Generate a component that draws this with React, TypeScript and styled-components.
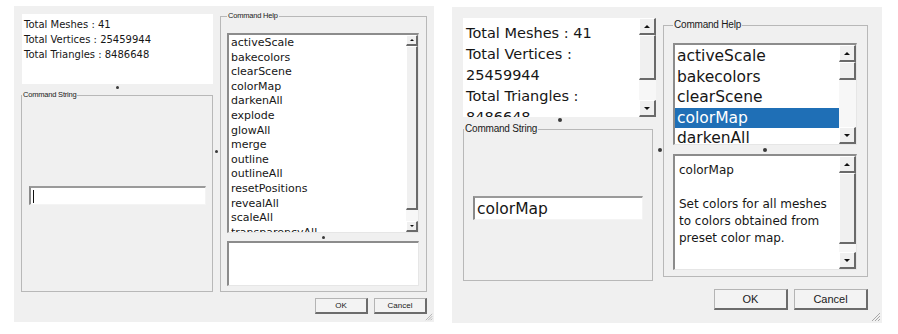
import * as React from 'react';
import styled, { createGlobalStyle, ThemeProvider } from 'styled-components';

interface DialogTheme {
  width: number;
  height: number;
  offsetX: number;
  offsetY: number;
  padTop: number;
  padLeft: number;
  padRight: number;
  leftCol: number;
  infoTop: number;
  infoInset: number;
  infoHeight: number;
  infoFont: number;
  infoLine: number;
  infoPad: string;
  leftGap: number;
  cmdWidth: number;
  cmdHeight: number;
  legendFont: number;
  legendLine: number;
  inputInset: number;
  inputWidth: number;
  inputHeight: number;
  inputFont: number;
  colGap: number;
  helpWidth: number;
  helpHeight: number;
  helpPad: string;
  listHeight: number;
  listFont: number;
  rowHeight: number;
  visibleRows: number;
  helpGap: number;
  descHeight: number;
  descFont: number;
  descLine: number;
  descPad: string;
  scrollWidth: number;
  arrowSize: number;
  glyph: number;
  footerGap: number;
  buttonWidth: number;
  buttonHeight: number;
  buttonGap: number;
  buttonFont: number;
  dotSize: number;
  gripSize: number;
}

type P = { theme: DialogTheme };

const compact: DialogTheme = {
  width: 420,
  height: 316,
  offsetX: 14,
  offsetY: 6,
  padTop: 5,
  padLeft: 7,
  padRight: 7,
  leftCol: 192,
  infoTop: 3,
  infoInset: 1,
  infoHeight: 70,
  infoFont: 10,
  infoLine: 15,
  infoPad: '3px 2px',
  leftGap: 6,
  cmdWidth: 192,
  cmdHeight: 202,
  legendFont: 7.5,
  legendLine: 10,
  inputInset: 7,
  inputWidth: 177,
  inputHeight: 19,
  inputFont: 13,
  colGap: 7,
  helpWidth: 207,
  helpHeight: 281,
  helpPad: '12px 7px 5px 6px',
  listHeight: 200,
  listFont: 11,
  rowHeight: 14.6,
  visibleRows: 14,
  helpGap: 8,
  descHeight: 45,
  descFont: 10,
  descLine: 14,
  descPad: '3px 3px',
  scrollWidth: 12,
  arrowSize: 11,
  glyph: 2.5,
  footerGap: 6,
  buttonWidth: 53,
  buttonHeight: 16,
  buttonGap: 6,
  buttonFont: 8,
  dotSize: 3,
  gripSize: 8,
};

const large: DialogTheme = {
  width: 430,
  height: 316,
  offsetX: 18,
  offsetY: 7,
  padTop: 11,
  padLeft: 11,
  padRight: 14,
  leftCol: 193,
  infoTop: 0,
  infoInset: 0,
  infoHeight: 99,
  infoFont: 14.5,
  infoLine: 21,
  infoPad: '4.5px 3px',
  leftGap: 5,
  cmdWidth: 190,
  cmdHeight: 159,
  legendFont: 10,
  legendLine: 14,
  inputInset: 9,
  inputWidth: 170,
  inputHeight: 24,
  inputFont: 15.5,
  colGap: 7,
  helpWidth: 205,
  helpHeight: 259,
  helpPad: '11px 10px 6px 9px',
  listHeight: 102,
  listFont: 15.5,
  rowHeight: 20.5,
  visibleRows: 5,
  helpGap: 9,
  descHeight: 116,
  descFont: 12,
  descLine: 17,
  descPad: '5.5px 4px',
  scrollWidth: 17,
  arrowSize: 17,
  glyph: 3.5,
  footerGap: 8,
  buttonWidth: 74,
  buttonHeight: 21,
  buttonGap: 6,
  buttonFont: 11,
  dotSize: 4,
  gripSize: 10,
};

const commands = [
  'activeScale',
  'bakecolors',
  'clearScene',
  'colorMap',
  'darkenAll',
  'explode',
  'glowAll',
  'merge',
  'outline',
  'outlineAll',
  'resetPositions',
  'revealAll',
  'scaleAll',
  'transparencyAll',
];

const GlobalStyle = createGlobalStyle`
  html, body {
    margin: 0;
    padding: 0;
    background: #ffffff;
  }
  body {
    font-family: "DejaVu Sans", "Liberation Sans", sans-serif;
    color: #161616;
  }
`;

const Page = styled.div`
  display: flex;
  align-items: flex-start;
  width: 898px;
  height: 334px;
  overflow: hidden;
`;

const Frame = styled.div<P>`
  position: relative;
  box-sizing: border-box;
  flex: none;
  display: flex;
  flex-direction: column;
  width: ${(p) => p.theme.width}px;
  height: ${(p) => p.theme.height}px;
  margin: ${(p) => p.theme.offsetY}px 0 0 ${(p) => p.theme.offsetX}px;
  padding: ${(p) => p.theme.padTop}px ${(p) => p.theme.padRight}px 0
    ${(p) => p.theme.padLeft}px;
  background: #f0f0f0;
`;

const Body = styled.div`
  display: flex;
  align-items: flex-start;
`;

const LeftColumn = styled.div<P>`
  display: flex;
  flex-direction: column;
  width: ${(p) => p.theme.leftCol}px;
`;

const InfoBox = styled.div<P>`
  display: flex;
  box-sizing: border-box;
  height: ${(p) => p.theme.infoHeight}px;
  margin: ${(p) => p.theme.infoTop}px 0 0 ${(p) => p.theme.infoInset}px;
  background: #ffffff;
  overflow: hidden;
`;

const InfoText = styled.div<P>`
  flex: 1;
  min-width: 0;
  padding: ${(p) => p.theme.infoPad};
  font-size: ${(p) => p.theme.infoFont}px;
  line-height: ${(p) => p.theme.infoLine}px;
  overflow: hidden;
`;

const HSplit = styled.div<{ $size: number }>`
  display: flex;
  align-items: center;
  justify-content: center;
  height: ${(p) => p.$size}px;
  flex: none;
`;

const VSplit = styled.div<P>`
  display: flex;
  align-items: center;
  justify-content: center;
  align-self: stretch;
  width: ${(p) => p.theme.colGap}px;
  flex: none;
`;

const Dot = styled.span<P>`
  width: ${(p) => p.theme.dotSize}px;
  height: ${(p) => p.theme.dotSize}px;
  border-radius: 50%;
  background: #3a3a3a;
`;

const GroupBox = styled.fieldset<{ $w: number; $h: number; $pad?: string }>`
  box-sizing: border-box;
  width: ${(p) => p.$w}px;
  height: ${(p) => p.$h}px;
  min-width: 0;
  margin: 0;
  padding: ${(p) => p.$pad || '0'};
  border: 1px solid #b8b8b8;
`;

const Legend = styled.legend<P>`
  margin-left: 0;
  padding: 0 1px;
  font-family: "Liberation Sans", Arial, sans-serif;
  font-size: ${(p) => p.theme.legendFont}px;
  line-height: ${(p) => p.theme.legendLine}px;
  letter-spacing: -0.2px;
  color: #1a1a1a;
`;

const CommandArea = styled.div<P>`
  display: flex;
  flex-direction: column;
  justify-content: center;
  height: ${(p) => p.theme.cmdHeight - p.theme.legendLine - 1}px;
`;

const TextInput = styled.div<P>`
  box-sizing: border-box;
  display: flex;
  align-items: center;
  width: ${(p) => p.theme.inputWidth}px;
  height: ${(p) => p.theme.inputHeight}px;
  margin-left: ${(p) => p.theme.inputInset}px;
  padding-left: 2px;
  background: #ffffff;
  border-top: 2px solid #9a9a9a;
  border-left: 2px solid #8a8a8a;
  border-right: 1px solid #f4f4f4;
  border-bottom: 1px solid #f4f4f4;
  font-size: ${(p) => p.theme.inputFont}px;
  white-space: nowrap;
`;

const Caret = styled.span`
  width: 1px;
  height: 13px;
  background: #111;
`;

const Sunken = styled.div<{ $h: number }>`
  box-sizing: border-box;
  display: flex;
  height: ${(p) => p.$h}px;
  background: #ffffff;
  border-top: 2px solid #8c8c8c;
  border-left: 2px solid #8c8c8c;
  border-right: 1px solid #e6e6e6;
  border-bottom: 1px solid #e6e6e6;
  overflow: hidden;
`;

const Rows = styled.div<P>`
  flex: 1;
  min-width: 0;
  padding-top: 1px;
  font-size: ${(p) => p.theme.listFont}px;
  overflow: hidden;
`;

const Row = styled.div<P & { $selected?: boolean }>`
  height: ${(p) => p.theme.rowHeight}px;
  line-height: ${(p) => p.theme.rowHeight}px;
  padding-left: 2px;
  white-space: nowrap;
  background: ${(p) => (p.$selected ? '#1f6fb6' : 'transparent')};
  color: ${(p) => (p.$selected ? '#ffffff' : 'inherit')};
`;

const DescText = styled.div<P>`
  flex: 1;
  min-width: 0;
  padding: ${(p) => p.theme.descPad};
  font-size: ${(p) => p.theme.descFont}px;
  line-height: ${(p) => p.theme.descLine}px;
  white-space: nowrap;
  overflow: hidden;
`;

const ScrollTrack = styled.div<P>`
  display: flex;
  flex-direction: column;
  width: ${(p) => p.theme.scrollWidth}px;
  flex: none;
  background: #f7f7f7;
`;

const ScrollRail = styled.div`
  flex: 1;
  display: flex;
  flex-direction: column;
`;

const Knob = styled.div<P & { $size?: number }>`
  box-sizing: border-box;
  display: flex;
  align-items: center;
  justify-content: center;
  height: ${(p) => p.$size ?? p.theme.arrowSize}px;
  flex: none;
  background: #f0f0f0;
  border-top: 1px solid #ffffff;
  border-left: 1px solid #ffffff;
  border-right: 2px solid #6a6a6a;
  border-bottom: 2px solid #6a6a6a;
`;

const Arrow = styled.span<P & { $down?: boolean }>`
  width: 0;
  height: 0;
  border-left: ${(p) => p.theme.glyph}px solid transparent;
  border-right: ${(p) => p.theme.glyph}px solid transparent;
  ${(p) =>
    p.$down
      ? `border-top: ${p.theme.glyph}px solid #111;`
      : `border-bottom: ${p.theme.glyph}px solid #111;`}
`;

const Footer = styled.div<P>`
  display: flex;
  justify-content: flex-end;
  gap: ${(p) => p.theme.buttonGap}px;
  margin-top: ${(p) => p.theme.footerGap}px;
`;

const Button = styled.button<P>`
  box-sizing: border-box;
  width: ${(p) => p.theme.buttonWidth}px;
  height: ${(p) => p.theme.buttonHeight}px;
  padding: 0;
  background: #f3f3f3;
  border-top: 1px solid #b4b4b4;
  border-left: 1px solid #b4b4b4;
  border-right: 2px solid #6c6c6c;
  border-bottom: 2px solid #6c6c6c;
  font-family: "Liberation Sans", Arial, sans-serif;
  font-size: ${(p) => p.theme.buttonFont}px;
  color: #1a1a1a;
`;

const Grip = styled.svg`
  position: absolute;
  right: 1px;
  bottom: 1px;
`;

function Scrollbar(props: { thumb: number }) {
  return (
    <ScrollTrack>
      <Knob>
        <Arrow />
      </Knob>
      <ScrollRail>
        <Knob $size={props.thumb} />
      </ScrollRail>
      <Knob>
        <Arrow $down />
      </Knob>
    </ScrollTrack>
  );
}

function SizeGrip(props: { size: number }) {
  const s = props.size;
  return (
    <Grip width={s} height={s} viewBox="0 0 10 10">
      <path d="M9 1 L1 9 M9 4 L4 9 M9 7 L7 9" stroke="#a8a8a8" strokeWidth="1" />
    </Grip>
  );
}

interface DialogProps {
  theme: DialogTheme;
  info: string[];
  infoThumb?: number;
  listThumb: number;
  selected?: string;
  command?: string;
  description?: string[];
  descThumb?: number;
}

function CommandDialog(props: DialogProps) {
  const { theme, info, infoThumb, listThumb, selected, command, description, descThumb } = props;
  const rows = commands.slice(0, theme.visibleRows);
  return (
    <ThemeProvider theme={theme}>
      <Frame>
        <Body>
          <LeftColumn>
            <InfoBox>
              <InfoText>
                {info.map((line, i) => (
                  <div key={i}>{line}</div>
                ))}
              </InfoText>
              {infoThumb !== undefined && <Scrollbar thumb={infoThumb} />}
            </InfoBox>
            <HSplit $size={theme.leftGap}>
              <Dot />
            </HSplit>
            <GroupBox $w={theme.cmdWidth} $h={theme.cmdHeight}>
              <Legend>Command String</Legend>
              <CommandArea>
                <TextInput>{command ? command : <Caret />}</TextInput>
              </CommandArea>
            </GroupBox>
          </LeftColumn>
          <VSplit>
            <Dot />
          </VSplit>
          <GroupBox $w={theme.helpWidth} $h={theme.helpHeight} $pad={theme.helpPad}>
            <Legend>Command Help</Legend>
            <Sunken $h={theme.listHeight}>
              <Rows>
                {rows.map((c) => (
                  <Row key={c} $selected={c === selected}>
                    {c}
                  </Row>
                ))}
              </Rows>
              <Scrollbar thumb={listThumb} />
            </Sunken>
            <HSplit $size={theme.helpGap}>
              <Dot />
            </HSplit>
            <Sunken $h={theme.descHeight}>
              <DescText>
                {(description || []).map((line, i) => (
                  <div key={i}>{line || '\u00a0'}</div>
                ))}
              </DescText>
              {descThumb !== undefined && <Scrollbar thumb={descThumb} />}
            </Sunken>
          </GroupBox>
        </Body>
        <Footer>
          <Button>OK</Button>
          <Button>Cancel</Button>
        </Footer>
        <SizeGrip size={theme.gripSize} />
      </Frame>
    </ThemeProvider>
  );
}

export default function App() {
  return (
    <>
      <GlobalStyle />
      <Page>
        <CommandDialog
          theme={compact}
          info={['Total Meshes : 41', 'Total Vertices : 25459944', 'Total Triangles : 8486648']}
          listThumb={164}
        />
        <CommandDialog
          theme={large}
          info={['Total Meshes : 41', 'Total Vertices :', '25459944', 'Total Triangles :', '8486648']}
          infoThumb={45}
          listThumb={18}
          selected="colorMap"
          command="colorMap"
          description={[
            'colorMap',
            '',
            'Set colors for all meshes',
            'to colors obtained from',
            'preset color map.',
          ]}
          descThumb={71}
        />
      </Page>
    </>
  );
}
